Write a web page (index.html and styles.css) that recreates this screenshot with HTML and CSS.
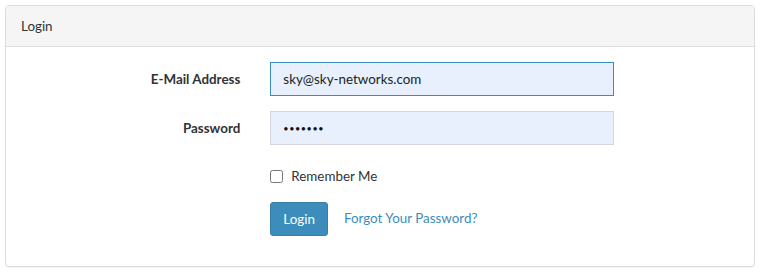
FILE: index.html
```html
<!DOCTYPE html>
<html lang="en">
<head>
<meta charset="utf-8">
<title>Login</title>
<link rel="stylesheet" href="styles.css">
</head>
<body>
<div class="panel">
  <div class="panel-heading">Login</div>
  <div class="panel-body">
    <form class="form" onsubmit="return false">
      <div class="form-group">
        <label class="control-label" for="email">E-Mail Address</label>
        <div class="field">
          <input id="email" type="email" class="form-control focused" value="sky@sky-networks.com" autofocus>
        </div>
      </div>
      <div class="form-group">
        <label class="control-label" for="password">Password</label>
        <div class="field">
          <input id="password" type="password" class="form-control password" value="secret1">
        </div>
      </div>
      <div class="form-group">
        <div class="field">
          <label class="checkbox"><input type="checkbox" name="remember"> Remember Me</label>
        </div>
      </div>
      <div class="form-group last">
        <div class="field actions">
          <button type="submit" class="btn">Login</button>
          <a class="link" href="#">Forgot Your Password?</a>
        </div>
      </div>
    </form>
  </div>
</div>
</body>
</html>
```

FILE: styles.css
```css
* { box-sizing: border-box; }
html, body { margin: 0; padding: 0; background: #fff; }
body {
  font-family: Lato, "Open Sans", "Liberation Sans", sans-serif;
  font-size: 13.4px;
  line-height: 1.6;
  color: #333;
  padding: 5px;
}
.panel {
  width: 750px;
  border: 1px solid #ddd;
  border-radius: 4px;
  background: #fff;
  box-shadow: 0 1px 1px rgba(0,0,0,0.05);
}
.panel-heading {
  background: #f5f5f5;
  border-bottom: 1px solid #ddd;
  border-radius: 3px 3px 0 0;
  padding: 9px 15px;
  height: 41px;
  line-height: 22px;
}
.panel-body { padding: 15px 0; }
.form-group {
  display: grid;
  grid-template-columns: 4fr 6fr 2fr;
  margin-bottom: 15px;
}
.control-label {
  grid-column: 1;
  text-align: right;
  font-weight: 700;
  padding: 6px 15px 0 15px;
  line-height: 22px;
}
.field { grid-column: 2; padding: 0 15px; }
.form-control {
  display: block;
  width: 100%;
  height: 34px;
  padding: 6px 12px;
  font: inherit;
  color: #222;
  background: #e8f0fe;
  border: 1px solid #d2d6de;
  border-radius: 0;
  outline: none;
  caret-color: #000;
}
.form-control.focused { border-color: #3c8dbc; }
.form-control.password {
  font-size: 9px;
  letter-spacing: 0.6px;
  color: #111;
}
.checkbox {
  display: flex;
  align-items: center;
  gap: 8px;
  padding-top: 6px;
  height: 27px;
  line-height: 21px;
  font-weight: 400;
  color: #333;
}
.checkbox input {
  margin: 0;
  width: 13px;
  height: 13px;
}
.actions { display: flex; align-items: center; gap: 16px; }
.btn {
  height: 34px;
  padding: 6px 12px;
  font: inherit;
  line-height: 20px;
  color: #fff;
  background: #3c8dbc;
  border: 1px solid #367fa9;
  border-radius: 3px;
}
.link { color: #3c8dbc; text-decoration: none; }
```
